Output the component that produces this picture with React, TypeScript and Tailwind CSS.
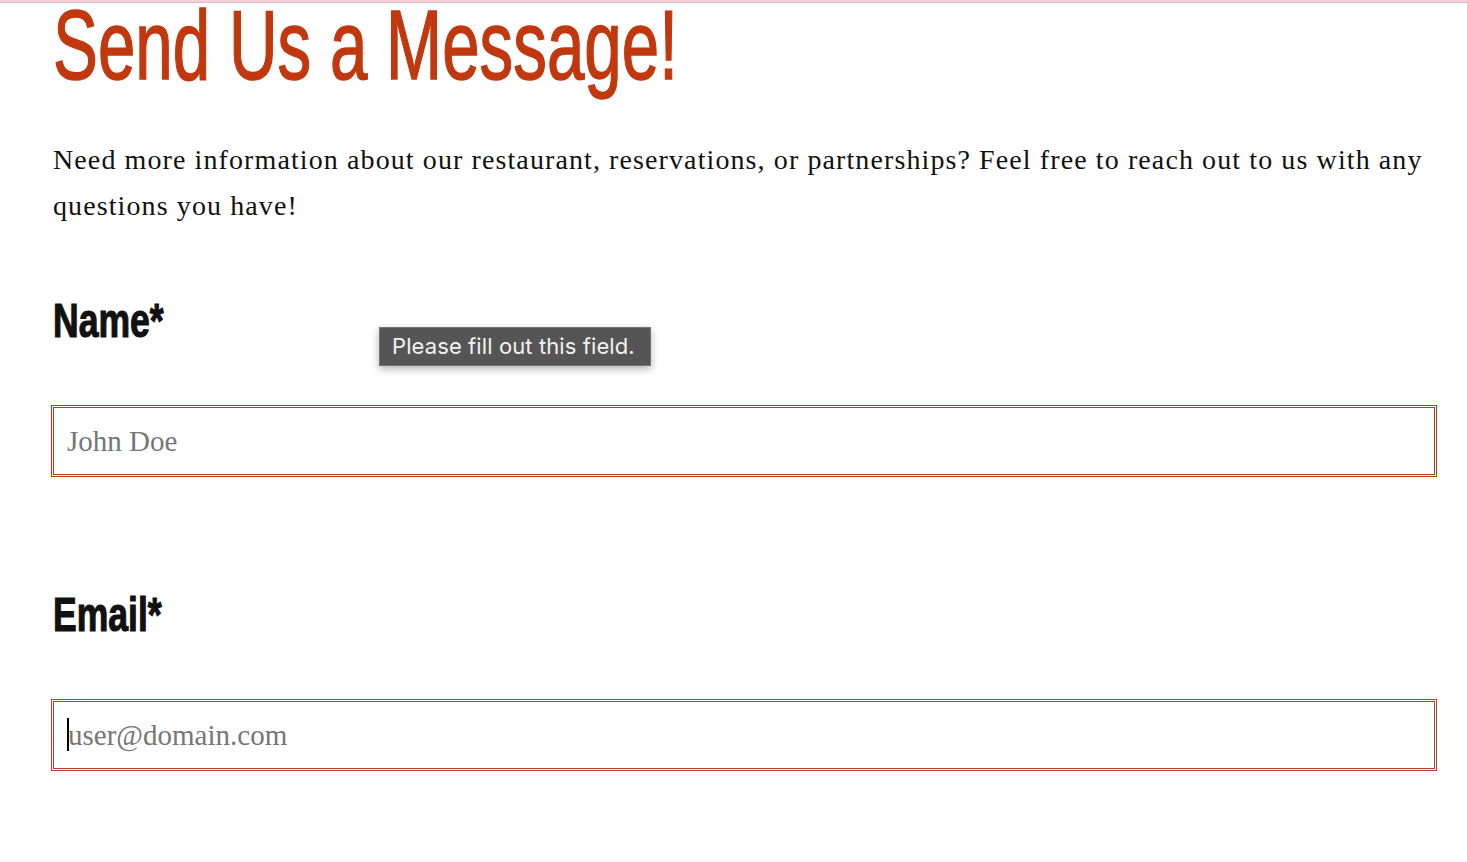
import React from "react";

export default function App() {
  return (
    <div className="min-h-[862px] w-full bg-white">
      <div className="h-[3px] w-full bg-[#f6d3da] border-b border-[#e3b7c1]" />
      <div className="pl-[53px] pr-[32px]">
        <h1 className="-mt-[3px] whitespace-nowrap font-['Liberation_Sans',sans-serif] text-[99px] leading-[90px] text-[#c2380e] [-webkit-text-stroke:1.5px_#c2380e]">
          <span className="inline-block origin-left scale-x-[0.68]">Send Us a Message!</span>
        </h1>
        <p className="mt-[47px] whitespace-nowrap font-['Liberation_Serif',serif] text-[28px] leading-[46px] tracking-[1.1px] text-[#111]">
          Need more information about our restaurant, reservations, or partnerships? Feel free to reach out to us with any
          <br />
          questions you have!
        </p>

        <div className="relative">
          <label className="mt-[62px] block h-[60px] whitespace-nowrap font-['Liberation_Sans',sans-serif] text-[48px] font-bold leading-[60px] text-[#111] [-webkit-text-stroke:1.2px_#111]">
            <span className="inline-block origin-left scale-x-[0.74]">Name*</span>
          </label>
          <div className="absolute left-[326px] top-[36px] flex h-[39px] w-[272px] items-center border border-[#767676] bg-[#555555] px-[12px] font-['Inter',sans-serif] text-[22px] tracking-[0.1px] text-[#f2f2f2] shadow-[0_3px_8px_rgba(0,0,0,0.3)]">
            Please fill out this field.
          </div>
        </div>
        <input
          type="text"
          placeholder="John Doe"
          className="mt-[56px] block h-[68px] w-full border border-[#c23a12] px-[13px] font-['Liberation_Serif',serif] text-[29px] text-black outline-none ring-1 ring-[#c23a12] ring-offset-1 ring-offset-white placeholder:text-[#767676]"
        />

        <label className="mt-[110px] block h-[60px] whitespace-nowrap font-['Liberation_Sans',sans-serif] text-[48px] font-bold leading-[60px] text-[#111] [-webkit-text-stroke:1.2px_#111]">
          <span className="inline-block origin-left scale-x-[0.74]">Email*</span>
        </label>
        <div className="relative mt-[56px]">
          <input
            type="email"
            placeholder="user@domain.com"
            className="block h-[68px] w-full border border-[#b8432a] px-[14px] font-['Liberation_Serif',serif] text-[29px] text-black outline-none ring-1 ring-[#b8432a] ring-offset-1 ring-offset-white placeholder:text-[#767676]"
          />
          <span className="absolute left-[14px] top-[17px] h-[33px] w-[2px] bg-black" />
        </div>
      </div>
    </div>
  );
}
